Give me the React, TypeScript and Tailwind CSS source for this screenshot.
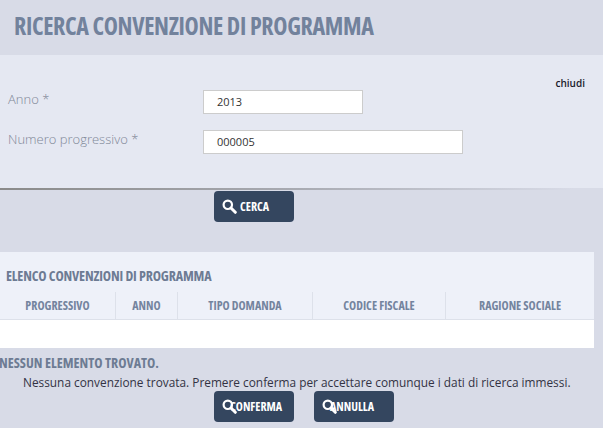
const condensed = "font-['Open_Sans',sans-serif] font-bold [font-stretch:75%]";

const columns = [
  { label: 'PROGRESSIVO', width: 'w-[116px]' },
  { label: 'ANNO', width: 'w-[62px]' },
  { label: 'TIPO DOMANDA', width: 'w-[135px]' },
  { label: 'CODICE FISCALE', width: 'w-[133px]' },
  { label: 'RAGIONE SOCIALE', width: 'w-[148px]' },
];

function SearchIcon() {
  return (
    <svg width="15" height="15" viewBox="0 0 15 15" fill="none" className="shrink-0">
      <circle cx="5.8" cy="5.8" r="4.2" stroke="white" strokeWidth="2.2" />
      <path d="M9 9l4.3 4.3" stroke="white" strokeWidth="3" strokeLinecap="round" />
    </svg>
  );
}

function ActionButton({ label, overlap }: { label: string; overlap?: boolean }) {
  return (
    <button className="flex h-[31px] w-[80px] items-center rounded-[4px] bg-[#34465f] pl-2 text-white">
      <SearchIcon />
      <span className={`${condensed} text-[12px] ${overlap ? '-ml-[7px]' : 'ml-[3px]'}`}>{label}</span>
    </button>
  );
}

export default function App() {
  return (
    <div className="h-[428px] w-[603px] overflow-hidden bg-[#d8dbe7] font-['Open_Sans',sans-serif]">
      {/* titolo */}
      <div className="flex h-[55px] items-center pl-[14px] pb-[4px]">
        <h1 className={`${condensed} text-[24px] tracking-[-0.35px] text-[#72829c]`}>RICERCA CONVENZIONE DI PROGRAMMA</h1>
      </div>

      {/* form di ricerca */}
      <div className="relative h-[134px] bg-[#e5e8f2] pl-2 pt-[35px]">
        <span className="absolute right-[18px] top-[21px] text-[10px] font-semibold text-[#1a1a2a]">chiudi</span>
        <div className="flex h-[24px] items-center">
          <label className="w-[195px] pb-[5px] text-[13px] font-light text-[#7f8797]">Anno *</label>
          <div className="flex h-[24px] w-[160px] items-center border border-[#cccccc] bg-white pl-[13px] text-[11px] text-[#333333]">2013</div>
        </div>
        <div className="mt-[16px] flex h-[24px] items-center">
          <label className="w-[195px] pb-[5px] text-[13px] font-light text-[#7f8797]">Numero progressivo *</label>
          <div className="flex h-[24px] w-[260px] items-center border border-[#cccccc] bg-white pl-[13px] text-[11px] text-[#333333]">000005</div>
        </div>
        <div className="absolute bottom-[-1px] left-0 h-[2px] w-full bg-gradient-to-r from-[#8a8a8a] via-[#a9abb3] via-50% to-[#d8dbe7] to-95%" />
      </div>

      <div className="ml-[214px] mt-[2px]">
        <ActionButton label="CERCA" />
      </div>

      {/* elenco */}
      <div className="mt-[30px] h-[96px] w-[594px] bg-[#eef1f9] pt-[13px]">
        <h2 className={`${condensed} pl-[6px] text-[14px] leading-[22px] tracking-[-0.16px] text-[#6d7b93]`}>ELENCO CONVENZIONI DI PROGRAMMA</h2>
        <div className="mt-[5px] flex h-[28px] border-b border-[#dde1ea]">
          {columns.map((c, i) => (
            <div
              key={c.label}
              className={`${c.width} ${condensed} flex items-center justify-center text-[12px] text-[#74849e] ${i < columns.length - 1 ? 'border-r border-[#dde1ea]' : ''}`}
            >
              {c.label}
            </div>
          ))}
        </div>
        <div className="h-[28px] bg-white" />
      </div>

      <div className={`${condensed} mt-[5px] -ml-px text-[14px] leading-[19px] text-[#6d7b93]`}>NESSUN ELEMENTO TROVATO.</div>
      <p className="mt-[1px] pl-[23px] text-[11.85px] leading-[18px] text-[#333344]">
        Nessuna convenzione trovata. Premere conferma per accettare comunque i dati di ricerca immessi.
      </p>
      <div className="ml-[214px] flex gap-[20px]">
        <ActionButton label="CONFERMA" overlap />
        <ActionButton label="ANNULLA" overlap />
      </div>
    </div>
  );
}
